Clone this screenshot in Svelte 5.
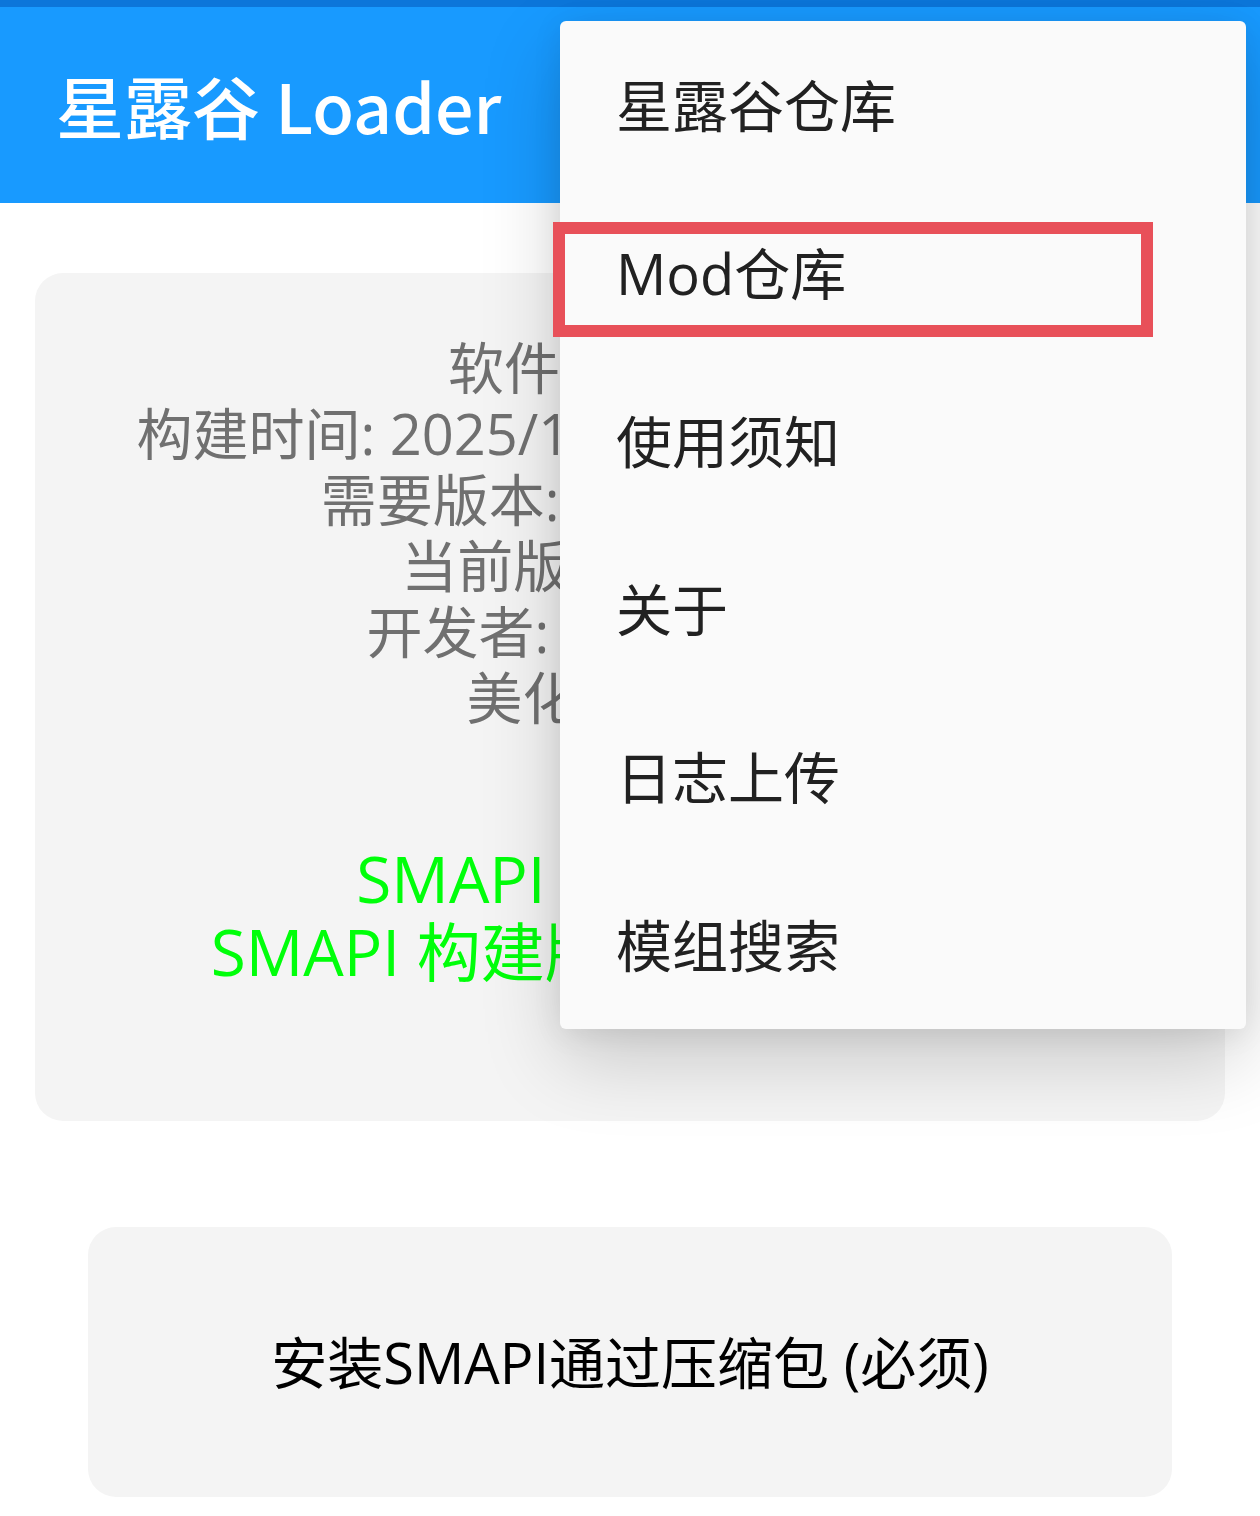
<script>
  const details = [
    '软件版本: 1.10',
    '构建时间: 2025/11/20 12:30:45 GMT+8',
    '需要版本: 1.6.15 (24356)',
    '当前版本: 1.6.15.0',
    '开发者: NRTnarathip',
    '美化: Pelican'
  ];

  const smapi = ['SMAPI 版本: 4.3.21', 'SMAPI 构建版本: 4.3.2.12345'];

  const menuItems = [
    { id: 'game', label: '星露谷仓库' },
    { id: 'mod', label: 'Mod仓库' },
    { id: 'notice', label: '使用须知' },
    { id: 'about', label: '关于' },
    { id: 'log', label: '日志上传' },
    { id: 'search', label: '模组搜索' }
  ];

  let marked = 'mod';
</script>

<div class="app">
  <header>
    <h1>星露谷 Loader</h1>
  </header>

  <main>
    <section class="info">
      <div class="details">
        {#each details as line}
          <p>{line}</p>
        {/each}
      </div>
      <div class="smapi">
        {#each smapi as line}
          <p>{line}</p>
        {/each}
      </div>
    </section>

    <button class="install">安装SMAPI通过压缩包 (必须)</button>
  </main>

  <div class="menu" role="menu">
    {#each menuItems as item (item.id)}
      <button
        class="menu-item"
        class:marked={marked === item.id}
        role="menuitem"
        on:click={() => (marked = item.id)}
      >{item.label}</button>
    {/each}
  </div>
</div>

<style>
  :global(body) {
    margin: 0;
    background: #fff;
  }

  .app {
    position: relative;
    overflow: hidden;
    font-family: 'Open Sans', 'Noto Sans CJK SC', sans-serif;
    font-size: 56px;
    line-height: 66px;
  }

  header {
    padding: 48px 56px;
    border-top: 7px solid #0c76da;
    background: #189aff;
    color: #fff;
  }

  h1 {
    margin: 0;
    font-family: 'Noto Sans CJK SC', sans-serif;
    font-size: 68px;
    font-weight: 500;
    line-height: 100px;
    white-space: nowrap;
  }

  p {
    margin: 0;
  }

  button {
    border: 0;
    font: inherit;
    cursor: pointer;
  }

  main {
    display: flex;
    flex-direction: column;
    gap: 106px;
    padding: 70px 35px 19px;
  }

  .info {
    display: flex;
    flex-direction: column;
    gap: 112px;
    padding: 61px 0 133px;
    border-radius: 28px;
    background: #f4f4f4;
    text-align: center;
    white-space: nowrap;
  }

  .details {
    color: #707070;
  }

  .smapi {
    color: #00ff0a;
    font-size: 64px;
    line-height: 73px;
  }

  .install {
    height: 270px;
    margin: 0 53px;
    border-radius: 28px;
    background: #f4f4f4;
    color: #000;
  }

  .menu {
    position: absolute;
    top: 21px;
    right: 14px;
    display: flex;
    flex-direction: column;
    width: 686px;
    border-radius: 6px;
    background: #fafafa;
    box-shadow: 0 30px 80px rgba(0, 0, 0, 0.18), 0 4px 30px rgba(0, 0, 0, 0.08);
  }

  .menu-item {
    position: relative;
    height: 168px;
    padding: 0 56px;
    background: none;
    color: #212121;
    text-align: left;
  }

  /* frame hangs slightly over the menu's left edge */
  .marked::after {
    content: '';
    position: absolute;
    inset: 33px 93px 20px -7px;
    border: 12px solid #e85059;
  }
</style>
